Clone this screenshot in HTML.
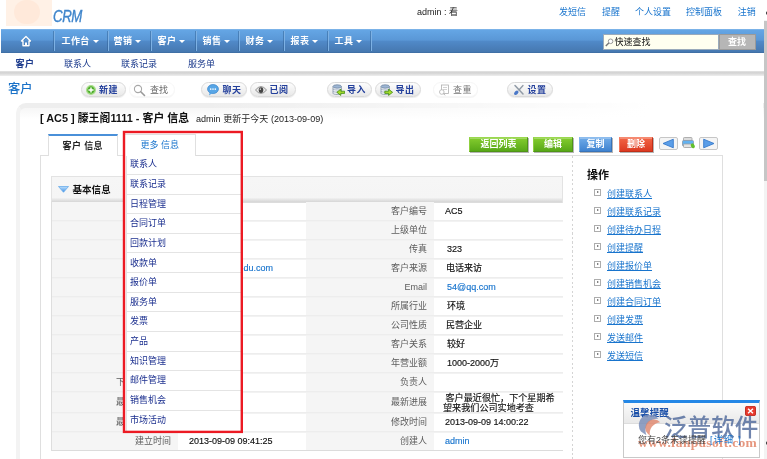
<!DOCTYPE html>
<html lang="zh-CN">
<head>
<meta charset="utf-8">
<title>CRM - 客户 信息</title>
<style>
*{box-sizing:border-box;margin:0;padding:0}
html,body{width:767px;height:459px;overflow:hidden;background:#fff}
body{position:relative;font-family:"Liberation Sans","Noto Sans CJK SC",sans-serif;font-size:9px;color:#000;line-height:1}
.a{position:absolute;white-space:nowrap}
a{text-decoration:none;color:inherit}
.t{position:absolute;white-space:nowrap;font-size:9px;line-height:12px;height:12px}
.lnk{color:#1874cd}
#root{position:absolute;left:0;top:0;width:767px;height:459px;overflow:hidden;will-change:transform;opacity:.999}
/* top */
#logo{left:6px;top:0;width:46px;height:26px;background:#fff1e6}
#logo i{position:absolute;left:8px;top:0;width:26px;height:24px;border-radius:13px;background:#ffe9da;display:block}
#crm{left:53px;top:7.2px;font-size:17px;line-height:20px;font-style:italic;color:#3f85cb;-webkit-text-stroke:.4px #3f85cb;letter-spacing:-0.5px;transform:scaleX(.78);transform-origin:0 0}
/* nav */
#nav{left:1px;top:29px;width:763px;height:24px;background:linear-gradient(#86b9ea 0,#64a5e4 1.5px,#5a97d6 46%,#5089c8 52%,#4678b0 95%,#3b6a9e 100%)}
#nav .it{position:absolute;top:0;height:24px;line-height:25px;font-size:9px;font-weight:bold;color:#fff;white-space:nowrap;letter-spacing:.4px;margin-left:-.5px}
#nav .sep{position:absolute;top:2px;width:1px;height:20px;background:#7db1e4;border-left:0;box-shadow:-1px 0 0 rgba(45,90,140,.45)}
.car{display:inline-block;width:0;height:0;border-left:3px solid transparent;border-right:3px solid transparent;border-top:3px solid #fff;vertical-align:middle;margin-left:3px;margin-top:-1px}
#sbox{left:602px;top:5px;width:116px;height:16px;background:#fffff0;border:1px solid #9ab;}
#sbtn{left:717.5px;top:5px;width:37px;height:16px;background:#b6b6b6;color:#fff;font-size:9px;line-height:15px;text-align:center;font-weight:bold;border:1px solid #9a9a9a}
/* subnav */
#sub{left:0;top:53px;width:763px;height:20px;background:#fff}
#subline{left:0;top:71px;width:764px;height:4.5px;background:linear-gradient(#e4e4e4 0,#d2d2d2 35%,#eeeeee 100%)}
/* toolbar */
.pill{position:absolute;top:82px;height:15px;border-radius:8px;background:linear-gradient(#fdfdfd,#e8e8e8);border:1px solid #d9d9d9;box-shadow:0 1px 1px rgba(0,0,0,.08)}
.pill span{position:absolute;top:1px;font-size:9px;line-height:13px;font-weight:bold;color:#24409c;white-space:nowrap;letter-spacing:.5px}
.pl{position:absolute;top:82.5px;font-size:9px;line-height:15px;color:#666;white-space:nowrap}
/* card */
#card{left:15.5px;top:102.5px;width:780px;height:380px;border:0 solid #f3f3f3;border-left-width:4px;border-top:5px solid #eeeeee;border-radius:10px 0 0 0;background:linear-gradient(#f6f6f6 0,#fff 11px)}
#cardfade{left:200px;top:102px;width:563px;height:18px;background:linear-gradient(to right,rgba(255,255,255,0) 0,rgba(255,255,255,.55) 45%,#fff 80%)}
#tabbody{left:40px;top:155px;width:683px;height:330px;border:1px solid #dfdfdf;background:#fff}
.tab{position:absolute;top:134px;height:22px;font-size:9px;line-height:21px;text-align:center;white-space:nowrap}
#tab1{letter-spacing:.4px;left:47.5px;width:70.5px;border:1px solid #e0e0e0;border-top:2px solid #4a90d9;border-bottom:0;background:#fff;font-weight:bold;color:#222}
#tab2{left:124px;width:71.5px;border:1px solid #e0e0e0;border-bottom:0;background:#fff;color:#1874cd;z-index:6;height:22px}
.btn{position:absolute;top:137px;height:15px;color:#fff;font-size:9px;line-height:13px;font-weight:bold;text-align:center;white-space:nowrap}
.g{background:linear-gradient(#84cc2e,#58a818);border:1px solid #4f9417;border-top-color:#9ad94e;border-left-color:#8fd040;box-shadow:inset 0 1px 0 rgba(255,255,255,.25),1px 1px 0 rgba(90,90,90,.45)}
.bl{background:linear-gradient(#6eaae8,#3f83d0);border:1px solid #3873b8;border-top-color:#8cbcee;border-left-color:#7fb2ea;box-shadow:inset 0 1px 0 rgba(255,255,255,.25),1px 1px 0 rgba(90,90,90,.45)}
.rd{background:linear-gradient(#f26444,#dc3a22);border:1px solid #bf2f18;border-top-color:#f58a70;border-left-color:#f27a5e;box-shadow:inset 0 1px 0 rgba(255,255,255,.25),1px 1px 0 rgba(90,90,90,.45)}
/* table */
#sechd{left:51px;top:176px;width:512px;height:26.5px;background:linear-gradient(#f6f6f6 0,#f5f5f5 20.5px,#e6e6e6 22.5px,#d9d9d9 24.5px,#dcdcdc 25.5px,#ececec 26.5px);border:1px solid #e3e3e3;border-bottom:0}
.lc{position:absolute;background:#f5f5f5}
.rl{position:absolute;left:51px;width:512px;height:2px;background:linear-gradient(#ececec 0,#eeeeee 50%,#f6f6f6 100%);margin-top:-.5px}
.lb{position:absolute;white-space:nowrap;font-size:9px;line-height:12px;color:#5c5c5c;text-align:right;transform:translateY(.45px)}
.vl{position:absolute;white-space:nowrap;font-size:9px;line-height:12px;color:#111;transform:translateY(.45px);-webkit-text-stroke:.15px currentColor}
/* dropdown */
#red{left:122px;top:130px;z-index:10}
#dd{left:125px;top:155px;width:116px;height:276px;background:#fff;border-top:1px solid #dcdcdc;z-index:5}
#dd:before{content:"";position:absolute;left:1px;top:0;width:1px;height:276px;background:#e2e2e2}
#dd div{position:absolute;left:2px;width:114px;height:19.65px;border-bottom:1px solid #e4e4e4;font-size:9px;line-height:18.2px;padding-left:3px;color:#1b2f8f;white-space:nowrap}
/* ops */
.op{position:absolute;left:607px;font-size:9px;line-height:12px;color:#1874cd;text-decoration:underline;white-space:nowrap}
.bx{position:absolute;left:594px;width:7px;height:7px;border:1px solid #adadad;background:#fff;margin-top:-.7px}
.bx:after{content:"";position:absolute;left:1.5px;top:.6px;border-left:2.6px solid #5a5a5a;border-top:1.900px solid transparent;border-bottom:1.900px solid transparent}
/* popup */
#pop{left:622.5px;top:399.5px;width:137px;height:58px;background:#fff;border:1px solid #c9c9c9;border-top:3px solid #2487e6;z-index:20}
#pophd{position:absolute;left:0;top:0;width:135px;height:21px;background:linear-gradient(#fafafa,#e9e9e9);border-bottom:1px solid #ddd}
/* scrollbar */
#sb{left:763.5px;top:0;width:4px;height:459px;background:#fff}
#sbtrack{left:764px;top:20px;width:3px;height:439px;background:#f3f3f3}
#sbthumb{left:764px;top:21px;width:3px;height:160px;background:#c6c6c6}
</style>
</head>
<body>
<div id="root">
<!-- header -->
<div class="a" id="logo"><i></i></div>
<div class="a" id="crm">CRM</div>
<div class="t" style="left:417px;top:6px;color:#222">admin : 看</div>
<a class="t lnk" style="left:559px;top:6px">发短信</a>
<a class="t lnk" style="left:602px;top:6px">提醒</a>
<a class="t lnk" style="left:635px;top:6px">个人设置</a>
<a class="t lnk" style="left:686px;top:6px">控制面板</a>
<a class="t lnk" style="left:737.8px;top:6px">注销</a>

<!-- nav -->
<div class="a" id="nav">
  <svg class="a" style="left:18.5px;top:5.5px" width="12" height="13" viewBox="0 0 12 13"><path d="M6.300 2L1.800 6.500H3.300V11.300H9.300V6.500H10.800Z" fill="none" stroke="#2f5a8c" stroke-width="1.300" stroke-linejoin="round" opacity=".55"/><path d="M6 1.500L1.500 6H3V10.800H9V6H10.500Z" fill="none" stroke="#fff" stroke-width="1.400" stroke-linejoin="round"/><rect x="5" y="7.500" width="2" height="3.300" fill="#fff"/></svg>
  <div class="sep" style="left:53px"></div>
  <div class="it" style="left:61px">工作台<span class="car"></span></div>
  <div class="sep" style="left:107px"></div>
  <div class="it" style="left:113px">营销<span class="car"></span></div>
  <div class="sep" style="left:150px"></div>
  <div class="it" style="left:157px">客户<span class="car"></span></div>
  <div class="sep" style="left:195px"></div>
  <div class="it" style="left:202px">销售<span class="car"></span></div>
  <div class="sep" style="left:238px"></div>
  <div class="it" style="left:245px">财务<span class="car"></span></div>
  <div class="sep" style="left:283px"></div>
  <div class="it" style="left:290px">报表<span class="car"></span></div>
  <div class="sep" style="left:327px"></div>
  <div class="it" style="left:334px">工具<span class="car"></span></div>
  <div class="sep" style="left:370px"></div>
  <div class="a" id="sbox"><svg class="a" style="left:1px;top:2.5px" width="9" height="9" viewBox="0 0 9 9"><circle cx="5.6" cy="3.3" r="2.3" fill="#fff" stroke="#999" stroke-width="1"/><path d="M3.8 5 L0.8 8" stroke="#777" stroke-width="1.4"/></svg><span class="t" style="left:10.5px;top:0;color:#111;line-height:14px">快速查找</span></div>
  <div class="a" id="sbtn">查找</div>
</div>

<!-- subnav -->
<div class="a" id="sub">
  <span class="t" style="left:15.5px;top:5px;font-weight:bold;color:#1b3a8c;letter-spacing:.5px">客户</span>
  <span class="t" style="left:64px;top:5px;color:#1b3a8c">联系人</span>
  <span class="t" style="left:121px;top:5px;color:#1b3a8c">联系记录</span>
  <span class="t" style="left:188px;top:5px;color:#1b3a8c">服务单</span>
</div>
<div class="a" id="subline"></div>

<!-- toolbar -->
<div class="a" style="left:8px;top:81px;font-size:12.3px;line-height:16px;color:#1a72c8;font-weight:500">客户</div>
<div class="pill" style="left:81px;width:45px"><svg class="a" style="left:3.5px;top:1.5px" width="10" height="10" viewBox="0 0 9 9"><circle cx="4.5" cy="4.5" r="3.900" fill="#4fae2c" stroke="#a9dd8c" stroke-width="1.200"/><path d="M4.5 2.2V6.8M2.2 4.500H6.8" stroke="#fff" stroke-width="1.3"/></svg><span style="left:17px">新建</span></div>
<div class="pill" style="left:129px;width:46px;background:#fff;border-color:#f7f7f7;box-shadow:0 1px 1px rgba(0,0,0,.04)"></div>
<svg class="a" style="left:133px;top:83.5px" width="13" height="13" viewBox="0 0 13 13"><circle cx="5" cy="5" r="3.6" fill="#fff" stroke="#a8a8a8" stroke-width="1.1"/><path d="M7.8 7.800L11.500 11.500" stroke="#999" stroke-width="1.6" stroke-linecap="round"/></svg>
<div class="pl" style="left:150px">查找</div>
<div class="pill" style="left:201px;width:46px"><svg class="a" style="left:4.5px;top:.5px" width="12" height="12" viewBox="0 0 11 10" preserveAspectRatio="none"><ellipse cx="5.5" cy="4.2" rx="5" ry="3.8" fill="#58a6e6" stroke="#3b86cc" stroke-width=".6"/><path d="M2.5 7 L1.8 9.600L5 7.600Z" fill="#58a6e6"/><circle cx="3.400" cy="4.2" r=".7" fill="#fff"/><circle cx="5.5" cy="4.2" r=".7" fill="#fff"/><circle cx="7.600" cy="4.2" r=".7" fill="#fff"/></svg><span style="left:20.5px">聊天</span></div>
<div class="pill" style="left:250px;width:46px"><svg class="a" style="left:4px;top:2px" width="12" height="10" viewBox="0 0 12 8" preserveAspectRatio="none"><path d="M.5 4 Q6 -1.500 11.500 4 Q6 9.500 .5 4Z" fill="#e8e8e8" stroke="#888" stroke-width=".8"/><circle cx="6" cy="4" r="2.3" fill="#444"/><circle cx="5.300" cy="3.300" r=".7" fill="#ccc"/></svg><span style="left:18.5px">已阅</span></div>
<div class="pill" style="left:327px;width:45px"><svg class="a" style="left:4px;top:1px" width="13" height="12" viewBox="0 0 13 12"><path d="M1 2.500V9.300C1 10.800 9.400 10.800 9.400 9.300V2.500" fill="#f4f6f9" stroke="#7f8fa3" stroke-width=".8"/><ellipse cx="5.200" cy="2.500" rx="4.200" ry="1.700" fill="#9db5d3" stroke="#6f86a3" stroke-width=".8"/><path d="M1 4.900C1 6.300 9.400 6.300 9.400 4.900M1 7.100C1 8.500 9.400 8.500 9.400 7.100" fill="none" stroke="#8a9ab0" stroke-width=".7"/><path d="M12.600 7.200H8.800V5.200L4.800 8.300L8.800 11.400V9.400H12.600Z" fill="#a6dc2c" stroke="#3f8a10" stroke-width=".8" stroke-linejoin="round"/></svg><span style="left:19px">导入</span></div>
<div class="pill" style="left:375px;width:46px"><svg class="a" style="left:4px;top:1px" width="13" height="12" viewBox="0 0 13 12"><path d="M1 2.500V9.300C1 10.800 9.400 10.800 9.400 9.300V2.500" fill="#f4f6f9" stroke="#7f8fa3" stroke-width=".8"/><ellipse cx="5.200" cy="2.500" rx="4.200" ry="1.700" fill="#9db5d3" stroke="#6f86a3" stroke-width=".8"/><path d="M1 4.900C1 6.300 9.400 6.300 9.400 4.900M1 7.100C1 8.500 9.400 8.500 9.400 7.100" fill="none" stroke="#8a9ab0" stroke-width=".7"/><path d="M4.800 7.200H8.600V5.200L12.600 8.300L8.600 11.400V9.400H4.800Z" fill="#a6dc2c" stroke="#3f8a10" stroke-width=".8" stroke-linejoin="round"/></svg><span style="left:19.5px">导出</span></div>
<div class="pill" style="left:433px;width:45px;background:#fff;border-color:#f6f6f6;box-shadow:0 1px 1px rgba(0,0,0,.05)"><svg class="a" style="left:4px;top:1px" width="12" height="12" viewBox="0 0 12 12"><rect x="3.500" y="1" width="7" height="8.500" fill="#fff" stroke="#b0b0b0" stroke-width=".8"/><path d="M5 3.500H9M5 5.500H9" stroke="#c0c0c0" stroke-width=".7"/><circle cx="3.800" cy="8" r="2.300" fill="#fff" stroke="#b0b0b0" stroke-width=".8"/><path d="M5.500 9.700L7 11.300" stroke="#aaa" stroke-width="1"/></svg><span style="left:19px;color:#777;font-weight:normal">查重</span></div>
<div class="pill" style="left:507px;width:46px"><svg class="a" style="left:5px;top:1px" width="12" height="12" viewBox="0 0 12 12"><path d="M2 1.500L10 10" stroke="#909aa6" stroke-width="1.500" stroke-linecap="round"/><path d="M10 1.500L6 6" stroke="#909aa6" stroke-width="1.300" stroke-linecap="round"/><ellipse cx="3.300" cy="8.800" rx="2.600" ry="1.700" transform="rotate(-45 3.300 8.800)" fill="#4a78c8"/></svg><span style="left:19.5px">设置</span></div>

<!-- card -->
<div class="a" id="card"></div>
<div class="a" id="cardfade"></div>
<div class="a" style="left:40px;top:111.5px;font-size:10.9px;line-height:13px;font-weight:bold;color:#111">[ AC5 ] 滕王阁1111 - 客户 信息</div>
<div class="a" style="left:196px;top:112.5px;font-size:9.05px;line-height:12px;color:#222">admin 更新于今天 (2013-09-09)</div>
<div class="a" id="tabbody"></div>
<div class="tab" id="tab1">客户 信息</div>
<div class="tab" id="tab2">更多 信息</div>

<div class="btn g" style="left:469px;width:59px">返回列表</div>
<div class="btn g" style="left:533px;width:40px">编辑</div>
<div class="btn bl" style="left:579px;width:33px">复制</div>
<div class="btn rd" style="left:619px;width:34px">删除</div>
<svg class="a" style="left:658.5px;top:137px" width="19" height="13" viewBox="0 0 19 13"><rect x=".5" y=".5" width="18" height="12" rx="1.500" fill="#f5f5f5" stroke="#c6c6c6"/><path d="M14.300 2.200V10.800L4 6.500Z" fill="#5b9ee8" stroke="#3579cc" stroke-width=".9" stroke-linejoin="round"/></svg>
<svg class="a" style="left:682px;top:137px" width="13" height="12" viewBox="0 0 13 12"><rect x="1.500" y=".5" width="8.500" height="3.500" rx=".8" fill="#dcdcdc" stroke="#a0a0a0" stroke-width=".8"/><rect x=".5" y="3.500" width="11" height="5.500" rx="1" fill="#62b2f0" stroke="#8a98a8" stroke-width=".8"/><rect x="1.500" y="7" width="8.500" height="3.500" rx=".8" fill="#e4e4e4" stroke="#a0a0a0" stroke-width=".8"/><ellipse cx="10.800" cy="8.800" rx="1.800" ry="2.500" transform="rotate(-30 10.800 8.800)" fill="#62c02c"/></svg>
<svg class="a" style="left:699px;top:137px" width="19" height="13" viewBox="0 0 19 13"><rect x=".5" y=".5" width="18" height="12" rx="1.500" fill="#f5f5f5" stroke="#c6c6c6"/><path d="M4.700 2.200V10.800L15 6.500Z" fill="#5b9ee8" stroke="#3579cc" stroke-width=".9" stroke-linejoin="round"/></svg>

<!-- section header -->
<div class="a" id="sechd"></div>
<svg class="a" style="left:58px;top:185.500px" width="11" height="7" viewBox="0 0 11 7"><defs><linearGradient id="tg" x1="0" y1="0" x2="0" y2="1"><stop offset="0" stop-color="#bfe0fb"/><stop offset="1" stop-color="#3f90e6"/></linearGradient></defs><path d="M.5.5H10.500L5.500 6.300Z" fill="url(#tg)" stroke="#5aa3ea" stroke-width=".7" stroke-linejoin="round"/></svg>
<div class="a" style="left:72.5px;top:184px;font-size:9.55px;line-height:12px;font-weight:bold;color:#111">基本信息</div>

<!-- table cells -->
<div class="lc" style="left:51px;top:202px;width:127px;height:248px"></div>
<div class="lc" style="left:306px;top:202px;width:128px;height:248px"></div>
<div id="rows"></div>
<div class="rl" style="top:220.500px"></div>
<div class="rl" style="top:239.500px"></div>
<div class="rl" style="top:258.500px"></div>
<div class="rl" style="top:277.500px"></div>
<div class="rl" style="top:296.500px"></div>
<div class="rl" style="top:315.500px"></div>
<div class="rl" style="top:334.500px"></div>
<div class="rl" style="top:353.500px"></div>
<div class="rl" style="top:372.500px"></div>
<div class="rl" style="top:391.500px"></div>
<div class="rl" style="top:412.500px"></div>
<div class="rl" style="top:431.500px"></div>
<div class="a" style="left:51px;top:450px;width:512px;height:1px;background:#dcdcdc"></div>
<div class="a" style="left:51px;top:201px;width:1px;height:250px;background:#dedede"></div>

<!-- left labels (mostly hidden under the dropdown) -->
<div class="lb" style="right:596px;top:205px">客户名称</div>
<div class="lb" style="right:596px;top:224px">助记简称</div>
<div class="lb" style="right:596px;top:243px">电话</div>
<div class="lb" style="right:596px;top:262px">网址</div>
<div class="lb" style="right:596px;top:281px">客户种类</div>
<div class="lb" style="right:596px;top:300px">客户类型</div>
<div class="lb" style="right:596px;top:319px">客户状态</div>
<div class="lb" style="right:596px;top:338px">人员规模</div>
<div class="lb" style="right:596px;top:357px">热点客户</div>
<div class="lb" style="right:597px;top:376px">下次联系时间</div>
<div class="lb" style="right:597px;top:396px">最近联系时间</div>
<div class="lb" style="right:597px;top:416px">最近联系记录</div>
<div class="lb" style="right:596px;top:435px">建立时间</div>
<a class="vl lnk" style="right:494px;top:262px;color:#1874cd">www.baidu.com</a>
<div class="vl" style="left:189px;top:435px">2013-09-09 09:41:25</div>

<!-- right labels -->
<div class="lb" style="right:340px;top:205px">客户编号</div>
<div class="lb" style="right:340px;top:224px">上级单位</div>
<div class="lb" style="right:340px;top:243px">传真</div>
<div class="lb" style="right:340px;top:262px">客户来源</div>
<div class="lb" style="right:340px;top:281px">Email</div>
<div class="lb" style="right:340px;top:300px">所属行业</div>
<div class="lb" style="right:340px;top:319px">公司性质</div>
<div class="lb" style="right:340px;top:338px">客户关系</div>
<div class="lb" style="right:340px;top:357px">年营业额</div>
<div class="lb" style="right:340px;top:376px">负责人</div>
<div class="lb" style="right:340px;top:396px">最新进展</div>
<div class="lb" style="right:340px;top:416px">修改时间</div>
<div class="lb" style="right:340px;top:435px">创建人</div>
<div class="vl" style="left:445px;top:205px">AC5</div>
<div class="vl" style="left:447px;top:243px">323</div>
<div class="vl" style="left:446px;top:262px">电话来访</div>
<a class="vl" style="left:447px;top:281px;color:#1874cd">54@qq.com</a>
<div class="vl" style="left:447px;top:300px">环境</div>
<div class="vl" style="left:446px;top:319px">民营企业</div>
<div class="vl" style="left:447px;top:338px">较好</div>
<div class="vl" style="left:447px;top:357px">1000-2000万</div>
<div class="vl" style="left:443px;top:392.5px;white-space:normal;width:120px;line-height:10px;height:auto;font-size:9.1px">&nbsp;客户最近很忙，下个星期希望来我们公司实地考查</div>
<div class="vl" style="left:445px;top:416px">2013-09-09 14:00:22</div>
<a class="vl" style="left:445px;top:435px;color:#1874cd">admin</a>

<!-- ops panel -->
<div class="a" style="left:572px;top:156px;width:1px;height:303px;background:repeating-linear-gradient(#d4d4d4 0,#d4d4d4 2px,rgba(255,255,255,0) 2px,rgba(255,255,255,0) 4.500px)"></div>
<div class="a" style="left:587px;top:168px;font-size:11px;line-height:14px;font-weight:bold;color:#111">操作</div>
<i class="bx" style="top:190px"></i><a class="op" style="top:188px">创建联系人</a>
<i class="bx" style="top:208px"></i><a class="op" style="top:206px">创建联系记录</a>
<i class="bx" style="top:226px"></i><a class="op" style="top:224px">创建待办日程</a>
<i class="bx" style="top:244px"></i><a class="op" style="top:242px">创建提醒</a>
<i class="bx" style="top:262px"></i><a class="op" style="top:260px">创建报价单</a>
<i class="bx" style="top:280px"></i><a class="op" style="top:278px">创建销售机会</a>
<i class="bx" style="top:298px"></i><a class="op" style="top:296px">创建合同订单</a>
<i class="bx" style="top:316px"></i><a class="op" style="top:314px">创建发票</a>
<i class="bx" style="top:334px"></i><a class="op" style="top:332px">发送邮件</a>
<i class="bx" style="top:352px"></i><a class="op" style="top:350px">发送短信</a>

<!-- dropdown menu -->
<div class="a" id="dd">
  <div style="top:-0.75px">联系人</div>
  <div style="top:18.90px">联系记录</div>
  <div style="top:38.55px">日程管理</div>
  <div style="top:58.20px">合同订单</div>
  <div style="top:77.85px">回款计划</div>
  <div style="top:97.50px">收款单</div>
  <div style="top:117.15px">报价单</div>
  <div style="top:136.80px">服务单</div>
  <div style="top:156.45px">发票</div>
  <div style="top:176.10px">产品</div>
  <div style="top:195.75px">知识管理</div>
  <div style="top:215.40px">邮件管理</div>
  <div style="top:235.05px">销售机会</div>
  <div style="top:254.70px;border-bottom:0">市场活动</div>
</div>
<svg class="a" id="red" width="124" height="306" viewBox="0 0 124 306"><rect x="2" y="2" width="117.800" height="299.900" fill="none" stroke="#ec1a23" stroke-width="2.400"/></svg>

<!-- reminder popup -->
<div class="a" id="pop">
  <div id="pophd"></div>
  <div class="a" style="left:7px;top:4px;font-size:9.5px;line-height:12px;font-weight:bold;color:#1a4fa8;letter-spacing:.1px">温馨提醒</div>
  <svg class="a" style="left:121px;top:3px" width="11" height="10" viewBox="0 0 12 12" preserveAspectRatio="none"><rect x=".5" y=".5" width="11" height="11" rx="1.500" fill="#e8392c" stroke="#b81f14"/><path d="M3.300 3.300L8.700 8.700M8.700 3.300L3.300 8.700" stroke="#fff" stroke-width="1.500"/></svg>
  <!-- watermark -->
  <svg class="a" style="left:14.5px;top:12.500px" width="26" height="22" viewBox="0 0 28 24"><path d="M3 18 A11 11 0 0 1 22 4 A13 13 0 0 0 9 22 Z" fill="#7d8fb8" opacity=".85"/><path d="M10 20 A9 9 0 0 1 24 8 A12 12 0 0 0 13 23 Z" fill="#e0856a" opacity=".8"/></svg>
  <div class="a" style="left:40.5px;top:12.5px;font-size:23.6px;line-height:26px;color:#566f9f;opacity:.85;font-weight:500;letter-spacing:0">泛普软件</div>
  <div class="a" style="left:14.5px;top:32px;font-family:'Liberation Serif',serif;font-size:13.500px;line-height:15px;font-weight:bold;color:#e07d5e;opacity:.8;letter-spacing:.3px">www.fanpusoft.com</div>
  <div class="a" style="left:14.5px;top:31px;font-size:9px;line-height:12px;color:#444">您有2条未读提醒<span style="color:#1874cd;letter-spacing:1.300px;margin-left:4px">[详细 ]</span></div>
</div>

<!-- scrollbar -->
<div class="a" id="sb"></div>
<div class="a" id="sbtrack"></div>
<div class="a" id="sbthumb"></div>
<div class="a" style="left:765.5px;top:10.5px;width:2px;height:4px;background:#333;border-radius:2px 0 0 2px"></div>
<div class="a" style="left:765.5px;top:440.5px;width:2px;height:4px;background:#333;border-radius:2px 0 0 2px"></div>
</div>
</body>
</html>
